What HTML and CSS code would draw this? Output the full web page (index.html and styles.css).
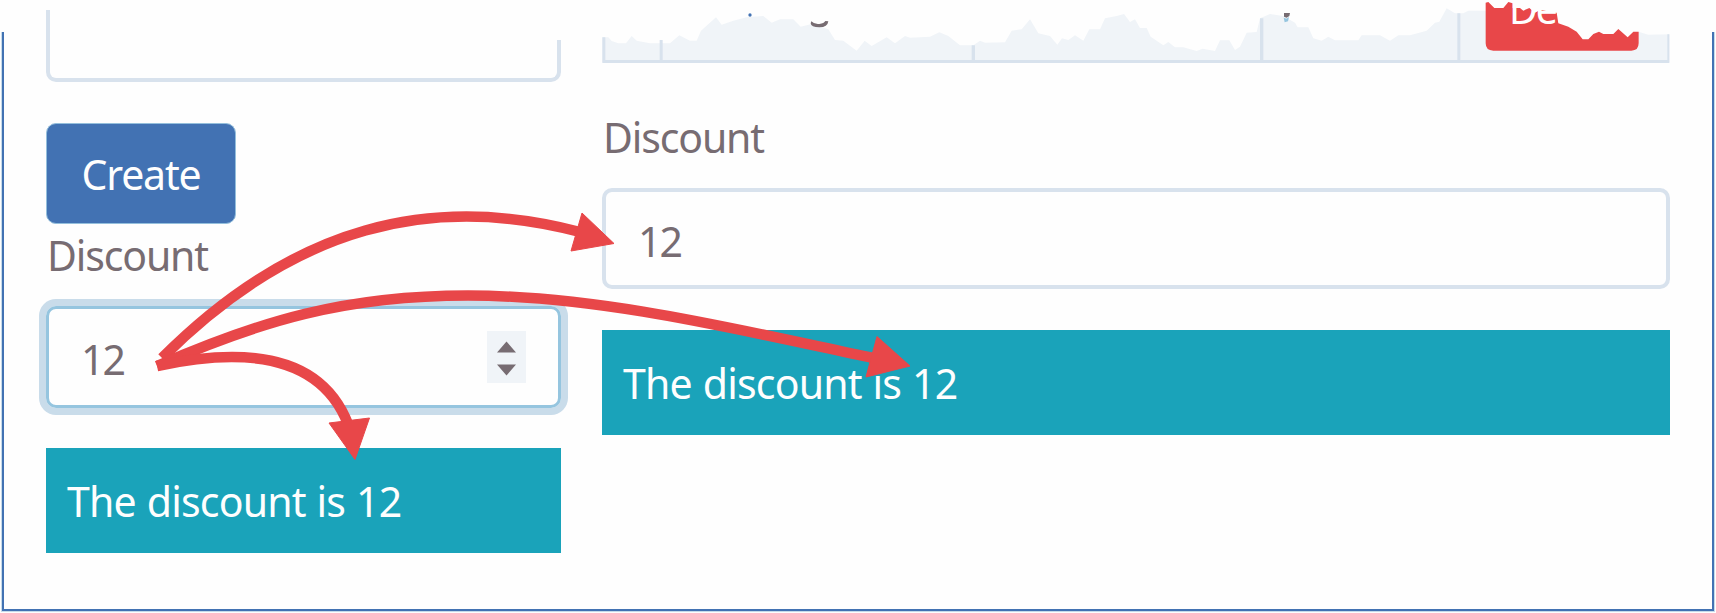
FILE: index.html
```html
<!DOCTYPE html>
<html lang="en">
<head>
<meta charset="utf-8">
<title>Discount</title>
<link rel="stylesheet" href="styles.css">
</head>
<body>
<main class="page">
  <div class="frame"></div>
  <div class="columns">
    <section class="col-left">
      <div class="field-cut"><div class="field-cut-body"></div></div>
      <button class="btn-create"><span class="text create-text">Create</span></button>
      <div class="label"><span class="text">Discount</span></div>
      <div class="field field-focus">
        <span class="text digits">12</span>
        <svg class="spinner" viewBox="0 0 39 52"><path d="M10 21.5 19.5 10.5 29 21.5ZM10 33.5H29L19.5 44.5Z"/></svg>
      </div>
      <div class="alert alert-left"><span class="text alert-text">The discount is 12</span></div>
    </section>
    <section class="col-right">
      <svg class="table-edge" viewBox="36 0 3204 192">
        <path class="row" d="M37 186V112H55L65 123 85 130H108L125 108 140 122 180 130H240L268 106 300 122H320L333 92 378 52 395 74 430 62 470 52 520 48 545 68 570 58H610L632 80 665 72 715 88 735 120 760 122 800 152 824 122 845 138 890 112 915 130 945 108 960 113 1020 110 1048 97 1075 108 1110 136H1150L1170 122 1185 128 1245 127 1265 92 1295 88 1320 58 1345 100 1380 108 1402 134 1416 115 1435 120 1455 106 1480 122 1498 88H1530L1545 55 1580 48 1602 42 1620 66 1635 58 1650 84H1670L1682 110 1720 136 1735 126 1755 142H1780L1820 153 1838 146 1875 153 1890 121H1918L1935 150 1950 140 1970 98 2000 96 2010 55 2040 42 2080 48 2115 68 2123 82H2155L2170 115 2195 122 2215 110 2235 121H2305L2315 106H2370L2400 122 2425 106H2460L2510 92 2535 68 2548 65 2570 25 2595 40H2620L2635 32H2690V140H3146V95L3175 104 3238 103V186Z"/>
        <path class="rule" d="M37 112h9v68h163v-60h9v60h927v-44h10v44h855V55h10v125h582V40h9v140h621v-77h6v86H37Z"/>
        <path class="ink" d="M664 64q10 10 24 8t18-9l9 1q-2 18-27 18t-26-12Z"/>
        <circle class="ink-blue" cx="480" cy="45" r="5"/>
        <path class="ink" d="M2082 39h18l-2 9-8 5-8-3Z"/>
        <path class="ink-pale" d="M2081 53l8 3 8-5-3 13-10 3Z"/>
        <path class="danger" d="M2687 8 2695 6 2713 24H2740L2755 6 2768 10V24L2790 24 2800 32 2818 24 2835 38 2850 30 2900 38 2905 70 2935 80 2960 95 2978 118H2995L3010 102 3027 95 3040 102H3070L3085 87 3113 112 3130 95H3146V130Q3146 152 3124 152H2710Q2687 152 2687 130Z"/>
        <text class="danger-text" x="2757" y="71">De</text>
      </svg>
      <div class="label label-right"><span class="text">Discount</span></div>
      <div class="field field-right"><span class="text digits">12</span></div>
      <div class="alert"><span class="text alert-text">The discount is 12</span></div>
    </section>
  </div>
  <svg class="arrows" viewBox="0 0 1716 613">
    <path class="shaft" d="M162 358C295 225 432 193 580 232"/>
    <path class="shaft" d="M157 366C260 321 345 295.500 468 295.500C600 295.500 740 330 873 358"/>
    <path class="shaft" d="M157 366C240 348 320 352 348 424"/>
    <path class="head" d="M614 243.500 582 213 571 251ZM910 366 877 336.500 866 377ZM355 459.500 329 423 369.500 418Z"/>
  </svg>
</main>
</body>
</html>
```
FILE: styles.css
```css
* { box-sizing: border-box; }
body { margin: 0; background: #fefefe; }
.page {
  position: relative;
  width: 1716px;
  height: 613px;
  overflow: hidden;
  font: 41px "Noto Sans", "Open Sans", sans-serif;
  color: #776c72;
}
.frame {
  position: absolute;
  inset: 32px 2px 2px 2px;
  border: solid #4272b3;
  border-width: 0 2.5px 2.5px;
  box-shadow: 0 0 0 1px #c7dcea;
  clip-path: inset(0 -2px -2px -2px);
}
.columns {
  display: grid;
  grid-template-columns: 515px 1068px;
  column-gap: 41px;
  padding-left: 46px;
}
.text { display: block; white-space: nowrap; letter-spacing: -1.15px; }
.alert-text { letter-spacing: -0.8px; word-spacing: 1px; }
.col-left, .col-right { display: flex; flex-direction: column; }
.field-cut {
  height: 82px;
  padding-top: 10px;
  clip-path: polygon(0 10px, 50% 10px, 50% 40px, 100% 40px, 100% 100%, 0 100%);
}
.field-cut-body {
  height: 72px;
  border: 4px solid #d8e2ed;
  border-top: 0;
  border-radius: 0 0 10px 10px;
}
.btn-create {
  width: 190px;
  height: 101px;
  margin-top: 41px;
  padding: 0;
  border: 1px solid #94bfdc;
  border-radius: 10px;
  background: #4272b3;
  color: #fefefe;
  font: inherit;
  text-align: center;
}
.label { height: 62px; line-height: 62px; padding-left: 1px; }
.field {
  display: flex;
  align-items: center;
  border: 4px solid #d8e2ed;
  border-radius: 10px;
  padding: 4px 31px 0 32px;
}
.digits { letter-spacing: -2px; }
.field-focus {
  height: 102px;
  margin-top: 20px;
  justify-content: space-between;
  border: 3px solid #95c5df;
  box-shadow: 0 0 0 7px #c9dcea;
}
.spinner { width: 39px; height: 52px; background: #f0f4f8; margin: -5px 1px 0 0; }
.spinner path { fill: #776c72; }
.alert {
  display: flex;
  align-items: center;
  height: 105px;
  margin-top: 41px;
  padding-left: 21px;
  background: #1aa3ba;
  color: #fefefe;
}
.alert-left { margin-top: 40px; }
.table-edge { display: block; width: 1068px; height: 64px; }
.row { fill: #f0f4f8; }
.rule { fill: #d8e2ed; }
.ink { fill: #776c72; }
.ink-blue { fill: #4272b3; }
.ink-pale { fill: #95c5df; }
.danger { fill: #e84749; }
.danger-text { fill: #fefefe; font-size: 118px; letter-spacing: -6px; }
.label-right { margin-top: 42px; }
.field-right { height: 101px; margin-top: 20px; }
.arrows { position: absolute; inset: 0; width: 1716px; height: 613px; }
.shaft { fill: none; stroke: #e84749; stroke-width: 10.5; }
.head { fill: #e84749; stroke: #e84749; stroke-width: 1; stroke-linejoin: round; }
```
